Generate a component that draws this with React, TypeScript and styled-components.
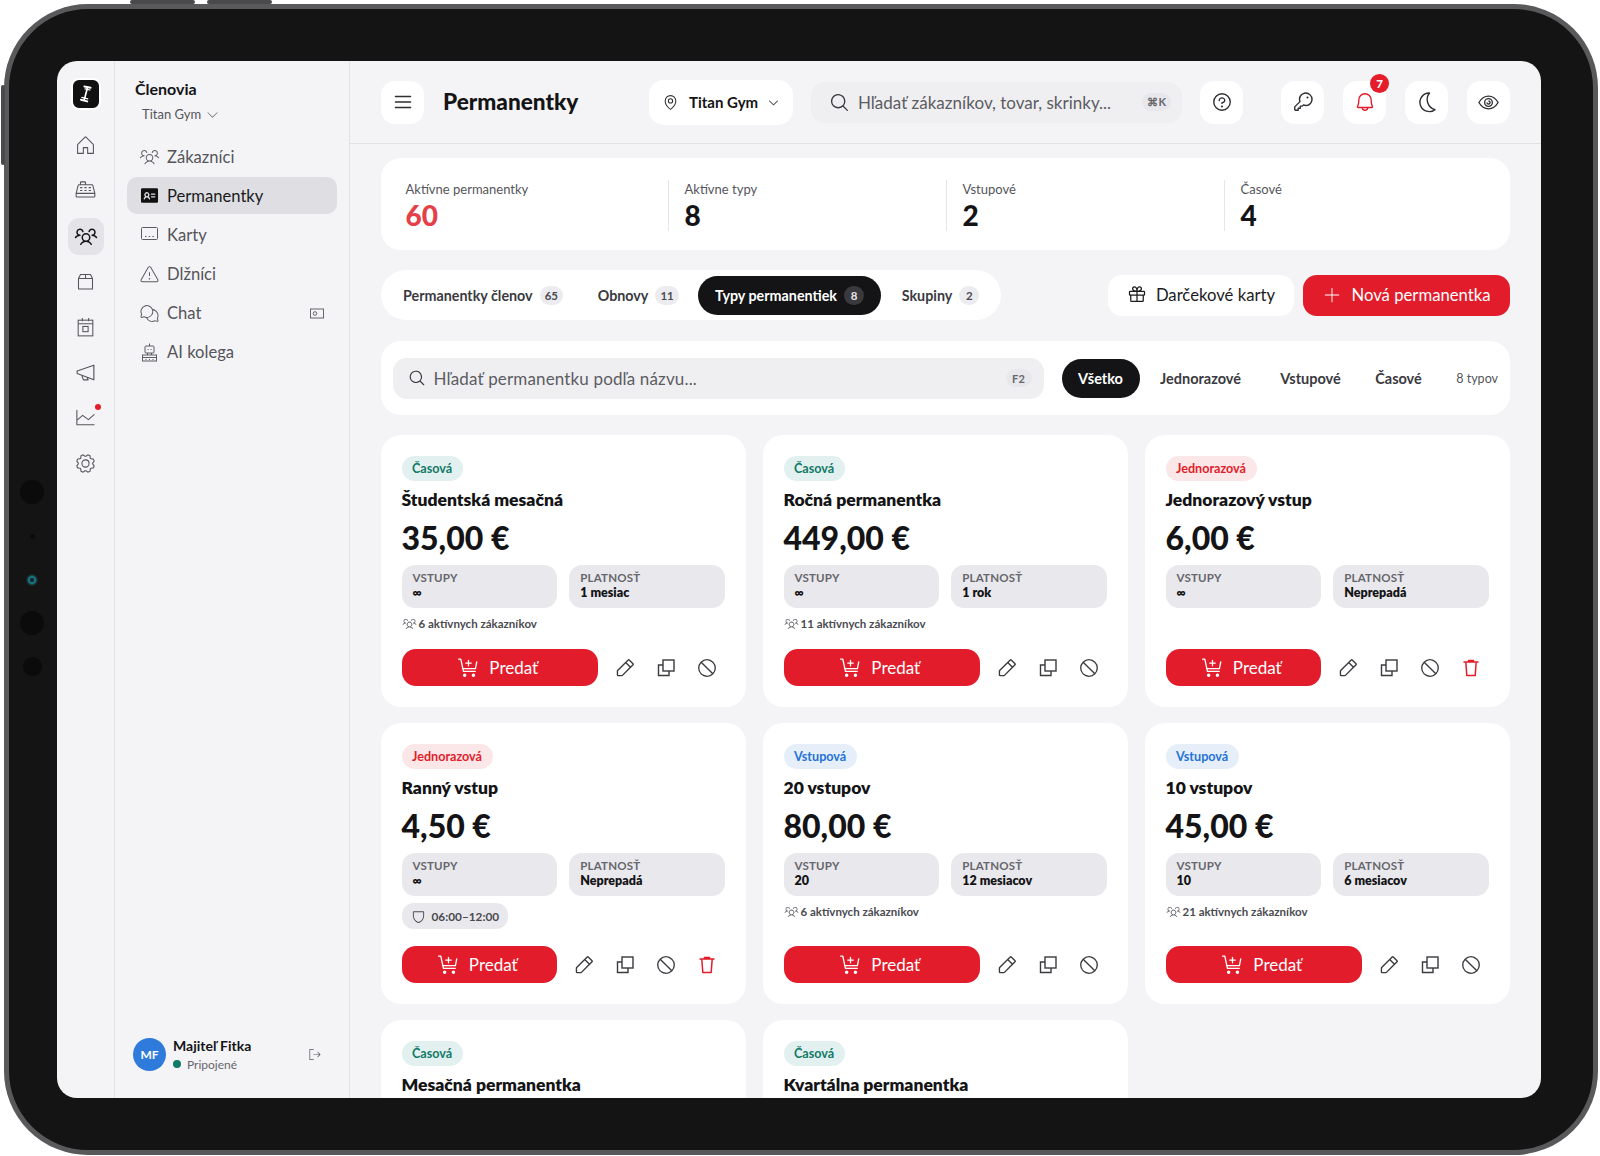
import React from "react";
import styled, { createGlobalStyle } from "styled-components";
import {
  PiBell,
  PiCaretDown,
  PiCaretDownLight,
  PiCashRegisterLight,
  PiChartLineLight,
  PiChatsCircleLight,
  PiGearLight,
  PiGift,
  PiHouseLight,
  PiIdentificationCardFill,
  PiKey,
  PiList,
  PiMagnifyingGlass,
  PiMapPin,
  PiPencilSimple,
  PiPlusLight,
  PiProhibit,
  PiQuestion,
  PiShield,
  PiSignOutLight,
  PiUsersThree,
  PiUsersThreeLight,
  PiWarningLight,
} from "react-icons/pi";

const GlobalStyle = createGlobalStyle`
  html, body { margin: 0; padding: 0; background: #fff; }
  body { font-family: "Lato", "Liberation Sans", sans-serif; color: #141416; }
  * { box-sizing: border-box; }
`;

const Stage = styled.div`
  width: 1600px;
  height: 1156px;
  padding: 4px 2px 1px 4px;
  overflow: hidden;
`;

const Device = styled.div`
  position: relative;
  width: 1594px;
  height: 1151px;
  background: #141414;
  border: 5px solid #59595b;
  border-radius: 84px;
  padding: 52px 52px 52px 48px;
`;

const HardwareButton = styled.div<{ $left: number; $top: number; $w: number; $h: number }>`
  position: absolute;
  left: ${(p) => p.$left}px;
  top: ${(p) => p.$top}px;
  width: ${(p) => p.$w}px;
  height: ${(p) => p.$h}px;
  background: #4a4a4c;
  border-radius: 2px;
`;

const Sensor = styled.div<{ $top: number; $size: number; $lens?: boolean }>`
  position: absolute;
  left: ${(p) => 23 - p.$size / 2}px;
  top: ${(p) => p.$top - p.$size / 2}px;
  width: ${(p) => p.$size}px;
  height: ${(p) => p.$size}px;
  border-radius: 50%;
  background: ${(p) => (p.$lens ? "radial-gradient(circle, #0d2a30 0 18%, #1d6f7a 30% 42%, #15262a 62%, #232325 100%)" : "#0b0b0b")};
`;

const Screen = styled.div`
  display: flex;
  width: 100%;
  height: 100%;
  background: #f4f4f6;
  border-radius: 20px;
  overflow: hidden;
`;

const Rail = styled.nav`
  width: 58px;
  flex: none;
  display: flex;
  flex-direction: column;
  align-items: center;
  padding-top: 17px;
  border-right: 1px solid #e1e1e4;
`;

const Logo = styled.div`
  width: 30px;
  height: 32px;
  background: #111;
  border: 2px solid #fff;
  border-radius: 8px;
  display: flex;
  align-items: center;
  justify-content: center;
  margin-bottom: 17px;
`;

const RailItem = styled.div<{ $active?: boolean }>`
  position: relative;
  width: 36px;
  height: 37px;
  margin-bottom: 8.4px;
  border-radius: 11px;
  display: flex;
  align-items: center;
  justify-content: center;
  font-size: 23px;
  color: ${(p) => (p.$active ? "#161618" : "#55555b")};
  background: ${(p) => (p.$active ? "#e4e4e8" : "transparent")};
`;

const RailDot = styled.span`
  position: absolute;
  top: 5px;
  right: 3px;
  width: 6px;
  height: 6px;
  border-radius: 50%;
  background: #e51c2a;
`;

const SubNav = styled.aside`
  width: 235px;
  flex: none;
  display: flex;
  flex-direction: column;
  padding: 18px 12px 0 12px;
  border-right: 1px solid #e1e1e4;
`;

const SubTitle = styled.div`
  font-size: 16px;
  font-weight: 700;
  line-height: 20px;
  padding-left: 8px;
`;

const GymSwitch = styled.div`
  display: flex;
  align-items: center;
  gap: 4px;
  height: 22px;
  margin: 4px 0 13px 15px;
  font-size: 13px;
  color: #55555b;
  svg { font-size: 15px; }
`;

const NavList = styled.div`
  display: flex;
  flex-direction: column;
  gap: 2.2px;
`;

const NavRow = styled.div<{ $active?: boolean }>`
  display: flex;
  align-items: center;
  gap: 7px;
  height: 37px;
  padding: 0 12px;
  border-radius: 10px;
  font-size: 16.6px;
  color: ${(p) => (p.$active ? "#1a1a1d" : "#55555b")};
  background: ${(p) => (p.$active ? "#dedee3" : "transparent")};
  svg { font-size: 21px; flex: none; color: ${(p) => (p.$active ? "#111" : "#5c5c62")}; }
`;

const NavTrail = styled.span`
  margin-left: auto;
  display: flex;
  padding-right: 1px;
  svg { font-size: 14px; }
`;

const UserBar = styled.div`
  margin-top: auto;
  display: flex;
  align-items: center;
  height: 33px;
  margin-bottom: 27px;
  padding: 0 15px 0 6px;
`;

const Avatar = styled.div`
  width: 33px;
  height: 33px;
  flex: none;
  border-radius: 50%;
  background: #2f7bdc;
  color: #fff;
  font-size: 12px;
  font-weight: 700;
  display: flex;
  align-items: center;
  justify-content: center;
`;

const UserText = styled.div`
  margin-left: 7px;
  flex: 1;
`;

const UserName = styled.div`
  font-size: 14px;
  font-weight: 700;
  line-height: 17px;
`;

const UserStatus = styled.div`
  display: flex;
  align-items: center;
  gap: 6px;
  margin-top: 2px;
  font-size: 12px;
  line-height: 17px;
  color: #66666c;
  &::before {
    content: "";
    width: 8px;
    height: 8px;
    border-radius: 50%;
    background: #127a66;
  }
`;

const Main = styled.main`
  flex: 1;
  min-width: 0;
  display: flex;
  flex-direction: column;
`;

const Header = styled.header`
  height: 83px;
  flex: none;
  display: flex;
  align-items: center;
  padding: 0 31px;
  border-bottom: 1px solid #e1e1e4;
`;

const SquareButton = styled.div<{ $gap?: number; $color?: string }>`
  position: relative;
  width: 43px;
  height: 43px;
  flex: none;
  margin-left: ${(p) => p.$gap ?? 0}px;
  background: #fff;
  border-radius: 14px;
  display: flex;
  align-items: center;
  justify-content: center;
  font-size: 22px;
  color: ${(p) => p.$color ?? "#2f2f33"};
`;

const Counter = styled.span`
  position: absolute;
  top: -7px;
  right: -3px;
  width: 19px;
  height: 19px;
  border-radius: 50%;
  background: #e51c2a;
  color: #fff;
  font-size: 11.5px;
  font-weight: 900;
  display: flex;
  align-items: center;
  justify-content: center;
`;

const PageTitle = styled.h1`
  width: 206px;
  margin: 0 0 0 19px;
  font-size: 22.6px;
  font-weight: 900;
  line-height: 30px;
`;

const LocationPill = styled.div`
  width: 144px;
  height: 45px;
  flex: none;
  background: #fff;
  border-radius: 15px;
  display: flex;
  align-items: center;
  padding-left: 13px;
  gap: 10px;
  font-size: 15px;
  font-weight: 700;
  svg:first-child { font-size: 17px; color: #2f2f33; }
  svg:last-child { font-size: 13px; margin-left: -1px; color: #4a4a50; }
`;

const HeaderSearch = styled.div`
  width: 371px;
  height: 41px;
  flex: none;
  margin-left: 18px;
  background: #efeff2;
  border-radius: 14px;
  display: flex;
  align-items: center;
  padding: 0 11px 0 18px;
  gap: 8px;
  font-size: 17px;
  color: #5c5c62;
  svg { font-size: 21px; color: #3a3a3f; flex: none; }
`;

const Kbd = styled.span`
  margin-left: auto;
  min-width: 26px;
  height: 18px;
  padding: 0 5px;
  border-radius: 9px;
  background: #e8e8ec;
  color: #66666c;
  font-size: 11px;
  font-weight: 700;
  display: flex;
  align-items: center;
  justify-content: center;
`;

const Content = styled.div`
  flex: 1;
  min-height: 0;
  overflow: hidden;
  padding: 14px 31px 0 30.5px;
  display: flex;
  flex-direction: column;
`;

const StatsCard = styled.section`
  height: 92px;
  flex: none;
  background: #fff;
  border-radius: 20px;
  display: grid;
  grid-template-columns: 262px repeat(3, 278px);
  padding: 0 0 0 25px;
  align-items: center;
  margin-bottom: 20px;
`;

const Stat = styled.div<{ $first?: boolean }>`
  height: 51px;
  margin-top: 2px;
  padding-left: ${(p) => (p.$first ? 0 : 16)}px;
  border-left: ${(p) => (p.$first ? "none" : "1px solid #e6e6ea")};
`;

const StatLabel = styled.div`
  font-size: 13px;
  line-height: 19px;
  color: #55555b;
`;

const StatValue = styled.div<{ $red?: boolean }>`
  font-size: 28px;
  line-height: 32px;
  font-weight: 900;
  color: ${(p) => (p.$red ? "#e5404a" : "#141416")};
`;

const TabsRow = styled.div`
  height: 50px;
  flex: none;
  display: flex;
  align-items: center;
  margin-bottom: 21px;
`;

const Tabs = styled.div`
  width: 620.5px;
  height: 50px;
  flex: none;
  background: #fff;
  border-radius: 25px;
  display: flex;
  align-items: center;
  padding: 0 0 0 7px;
`;

const Tab = styled.div<{ $active?: boolean; $w: number }>`
  width: ${(p) => p.$w}px;
  height: 39px;
  flex: none;
  border-radius: 20px;
  display: flex;
  align-items: center;
  justify-content: center;
  gap: 7px;
  font-size: 14.3px;
  font-weight: 700;
  color: ${(p) => (p.$active ? "#fff" : "#3a3a3f")};
  background: ${(p) => (p.$active ? "#141416" : "transparent")};
`;

const TabCount = styled.span<{ $active?: boolean }>`
  min-width: 20px;
  height: 19px;
  padding: 0 5px;
  border-radius: 10px;
  font-size: 11.5px;
  font-weight: 700;
  display: flex;
  align-items: center;
  justify-content: center;
  color: ${(p) => (p.$active ? "#e4e4e8" : "#4a4a50")};
  background: ${(p) => (p.$active ? "#3a3a3e" : "#ececf0")};
`;

const ActionButton = styled.div<{ $primary?: boolean; $w: number; $gap?: number }>`
  width: ${(p) => p.$w}px;
  height: 41px;
  flex: none;
  margin-left: ${(p) => p.$gap ?? 0}px;
  border-radius: 14px;
  display: flex;
  align-items: center;
  justify-content: center;
  gap: 9px;
  font-size: 16.7px;
  color: ${(p) => (p.$primary ? "#fff" : "#1c1c1f")};
  background: ${(p) => (p.$primary ? "#e21c2b" : "#fff")};
  svg { font-size: 20px; }
`;

const FilterCard = styled.section`
  height: 74px;
  flex: none;
  background: #fff;
  border-radius: 20px;
  display: flex;
  align-items: center;
  padding: 0 12px;
  margin-bottom: 20px;
`;

const FilterInput = styled.div`
  width: 651px;
  height: 41px;
  flex: none;
  background: #efeff2;
  border-radius: 14px;
  display: flex;
  align-items: center;
  gap: 8px;
  padding: 0 12px 0 15px;
  font-size: 17px;
  letter-spacing: 0.15px;
  color: #5c5c62;
  svg { font-size: 18px; color: #3a3a3f; flex: none; }
`;

const FilterChip = styled.div<{ $active?: boolean; $w: number; $gap?: number }>`
  width: ${(p) => p.$w}px;
  height: 39px;
  flex: none;
  margin-left: ${(p) => p.$gap ?? 0}px;
  border-radius: 20px;
  display: flex;
  align-items: center;
  justify-content: center;
  font-size: 14.5px;
  font-weight: 700;
  color: ${(p) => (p.$active ? "#fff" : "#3a3a3f")};
  background: ${(p) => (p.$active ? "#141416" : "transparent")};
`;

const TypeCount = styled.span`
  margin-left: auto;
  font-size: 12.5px;
  color: #55555b;
`;

const CardGrid = styled.div`
  display: grid;
  grid-template-columns: repeat(3, 1fr);
  gap: 16px 16.5px;
  flex: none;
`;

const Card = styled.article<{ $peek?: boolean }>`
  background: #fff;
  border-radius: 20px;
  padding: 21px;
  display: flex;
  flex-direction: column;
  min-height: ${(p) => (p.$peek ? 120 : 0)}px;
`;

const badgeColors = {
  "Časová": { bg: "#e2f0f0", fg: "#127a66" },
  "Jednorazová": { bg: "#fce7e8", fg: "#e21c2b" },
  "Vstupová": { bg: "#e6eff9", fg: "#2472d6" },
};

type Kind = keyof typeof badgeColors;

const Badge = styled.span<{ $kind: Kind }>`
  align-self: flex-start;
  height: 25px;
  padding: 0 10.5px;
  border-radius: 13px;
  display: flex;
  align-items: center;
  font-size: 12.6px;
  font-weight: 700;
  color: ${(p) => badgeColors[p.$kind].fg};
  background: ${(p) => badgeColors[p.$kind].bg};
`;

const CardTitle = styled.h3`
  margin: 7px 0 0;
  font-size: 17.5px;
  font-weight: 800;
  line-height: 23px;
`;

const Price = styled.div`
  margin-top: 6px;
  font-size: 32px;
  font-weight: 900;
  line-height: 42px;
`;

const InfoGrid = styled.div`
  margin-top: 6px;
  display: grid;
  grid-template-columns: 1fr 1fr;
  gap: 12px;
`;

const InfoBox = styled.div`
  height: 43px;
  padding: 5px 11px;
  border-radius: 13px;
  background: #e9e9ed;
`;

const InfoLabel = styled.div`
  font-size: 11.5px;
  font-weight: 700;
  line-height: 15px;
  letter-spacing: 0.2px;
  color: #66666c;
`;

const InfoValue = styled.div`
  font-size: 12.5px;
  font-weight: 800;
  line-height: 15px;
`;

const MetaRow = styled.div`
  display: flex;
  align-items: center;
  gap: 2px;
  height: 17px;
  margin-top: 7px;
  font-size: 11.5px;
  font-weight: 700;
  color: #4a4a50;
  svg { font-size: 15px; color: #5c5c62; }
`;

const TimePill = styled.div`
  align-self: flex-start;
  display: flex;
  align-items: center;
  gap: 6px;
  height: 26px;
  margin-top: 7px;
  padding: 0 9px;
  border-radius: 12px;
  background: #e9e9ed;
  font-size: 11.8px;
  font-weight: 700;
  color: #4a4a50;
  svg { font-size: 15px; }
`;

const Actions = styled.div`
  margin-top: auto;
  padding-top: 17px;
  display: flex;
  align-items: center;
  gap: 5px;
`;

const SellButton = styled.div`
  flex: 1;
  height: 37px;
  margin-right: 4px;
  padding-right: 4px;
  border-radius: 14px;
  background: #e21c2b;
  color: #fff;
  font-size: 17px;
  display: flex;
  align-items: center;
  justify-content: center;
  gap: 9px;
`;

const IconAction = styled.div<{ $danger?: boolean }>`
  width: 36px;
  height: 37px;
  flex: none;
  display: flex;
  align-items: center;
  justify-content: center;
  font-size: 22px;
  color: ${(p) => (p.$danger ? "#e21c2b" : "#3a3a3f")};
`;

const LogoMark = () => (
  <svg width="18" height="20" viewBox="0 0 18 20" fill="none" stroke="#fff" strokeLinecap="round">
    <path d="M10.400 4 7.200 16" strokeWidth="1.700" />
    <path d="M7.400 2.400 13.600 3.800" strokeWidth="2" />
    <path d="M4 15.800 10.200 17.400" strokeWidth="2" />
    <path d="M4.800 13.400 10.800 14.800" strokeWidth="1.200" />
    <path d="M8 4.800 13 6" strokeWidth="1.200" />
  </svg>
);

const PackageMark = () => (
  <svg width="23" height="23" viewBox="0 0 23 23" fill="none" stroke="currentColor" strokeWidth="1.050" strokeLinejoin="round">
    <path d="M4.500 8.500 6.500 4.500h10l2 4v10.500h-14z" />
    <path d="M4.500 8.500h14M11.500 4.500v4" />
  </svg>
);

const CalendarMark = () => (
  <svg width="23" height="23" viewBox="0 0 22 22" fill="none" stroke="currentColor" strokeWidth="1">
    <rect x="4" y="4" width="14" height="15" />
    <path d="M8 2v3M14 2v3M4 7.500h14" />
    <rect x="8.500" y="10" width="5" height="5" />
  </svg>
);

const MegaphoneMark = () => (
  <svg width="23" height="23" viewBox="0 0 22 22" fill="none" stroke="currentColor" strokeWidth="1.100" strokeLinejoin="round">
    <path d="M19 4 3 9.500v2.500l16 6z" />
    <path d="M7.500 13.700 9 18h4.500l-1-2.500" />
  </svg>
);

const CardsMark = () => (
  <svg width="21" height="21" viewBox="0 0 21 21" fill="none" stroke="currentColor" strokeWidth="1">
    <rect x="2.500" y="3.500" width="16" height="12" rx="1" />
    <path d="M6 12.500h1.500M9.700 12.500h1.500M13.400 12.500h1.500" />
  </svg>
);

const RobotMark = () => (
  <svg width="21" height="21" viewBox="0 0 21 21" fill="none" stroke="currentColor" strokeWidth="1">
    <path d="M10.500 1.500v2.500" />
    <rect x="6" y="4" width="9" height="7" rx="1" />
    <path d="M8.500 7.500h1M11.500 7.500h1M8.500 11v2M12.500 11v2" />
    <rect x="3.500" y="13" width="14" height="6" />
    <path d="M3.500 15.500h14M6.500 17.500h1M10 17.500h1M13.500 17.500h1" />
  </svg>
);

const ChatTrail = () => (
  <svg width="14" height="11" viewBox="0 0 14 11" fill="none" stroke="#66666c" strokeWidth="1">
    <rect x="0.500" y="1" width="13" height="9" />
    <circle cx="5" cy="5.500" r="1.800" />
  </svg>
);

const MoonMark = () => (
  <svg width="24" height="24" viewBox="0 0 24 24" fill="none" stroke="currentColor" strokeWidth="1.400" strokeLinejoin="round">
    <path d="M14.500 3A9.300 9.300 0 1 0 20 19.600 10.400 10.400 0 0 1 14.500 3Z" />
  </svg>
);

const EyeMark = () => (
  <svg width="23" height="23" viewBox="0 0 24 24" fill="none" stroke="currentColor" strokeWidth="1.400">
    <path d="M2 12c2.600-4.400 6-6.600 10-6.600S19.400 7.600 22 12c-2.600 4.400-6 6.600-10 6.600S4.600 16.400 2 12Z" />
    <circle cx="12" cy="12" r="4" />
    <path d="M12 10.400a1.600 1.600 0 1 1-1.600 1.600" />
  </svg>
);

const CopyMark = () => (
  <svg width="20" height="20" viewBox="0 0 20 20" fill="none" stroke="currentColor" strokeWidth="1.400">
    <rect x="7" y="2" width="11" height="11" />
    <path d="M7 7H2.500v10.500H13V13" />
  </svg>
);

const TrashMark = () => (
  <svg width="20" height="20" viewBox="0 0 20 20" fill="none" stroke="currentColor" strokeWidth="1.500" strokeLinecap="round" strokeLinejoin="round">
    <path d="M3 4h14M7.500 4V2.500h5V4M4.800 4l1 13.500h8.400l1-13.500" />
  </svg>
);

const CartPlus = () => (
  <svg width="23" height="22" viewBox="0 0 20 20" fill="none" stroke="#fff" strokeWidth="1.200" strokeLinecap="round" strokeLinejoin="round">
    <path d="M1 2h2l2.400 11h10.800M17.500 4.500l-1.200 6H4.600" />
    <path d="M10 3v5M7.500 5.500h5" />
    <circle cx="6.500" cy="16.500" r="1" fill="#fff" />
    <circle cx="14.500" cy="16.500" r="1" fill="#fff" />
  </svg>
);

type CardData = {
  kind: Kind;
  name: string;
  price?: string;
  entries?: string;
  validity?: string;
  active?: number;
  hours?: string;
  canDelete?: boolean;
};

const cards: CardData[] = [
  { kind: "Časová", name: "Študentská mesačná", price: "35,00 €", entries: "∞", validity: "1 mesiac", active: 6 },
  { kind: "Časová", name: "Ročná permanentka", price: "449,00 €", entries: "∞", validity: "1 rok", active: 11 },
  { kind: "Jednorazová", name: "Jednorazový vstup", price: "6,00 €", entries: "∞", validity: "Neprepadá", canDelete: true },
  { kind: "Jednorazová", name: "Ranný vstup", price: "4,50 €", entries: "∞", validity: "Neprepadá", hours: "06:00–12:00", canDelete: true },
  { kind: "Vstupová", name: "20 vstupov", price: "80,00 €", entries: "20", validity: "12 mesiacov", active: 6 },
  { kind: "Vstupová", name: "10 vstupov", price: "45,00 €", entries: "10", validity: "6 mesiacov", active: 21 },
  { kind: "Časová", name: "Mesačná permanentka" },
  { kind: "Časová", name: "Kvartálna permanentka" },
];

const PassCard = ({ card }: { card: CardData }) => {
  // the last row runs under the screen edge, only its heading is visible
  if (!card.price) {
    return (
      <Card $peek>
        <Badge $kind={card.kind}>{card.kind}</Badge>
        <CardTitle>{card.name}</CardTitle>
      </Card>
    );
  }
  return (
    <Card>
      <Badge $kind={card.kind}>{card.kind}</Badge>
      <CardTitle>{card.name}</CardTitle>
      <Price>{card.price}</Price>
      <InfoGrid>
        <InfoBox>
          <InfoLabel>VSTUPY</InfoLabel>
          <InfoValue>{card.entries}</InfoValue>
        </InfoBox>
        <InfoBox>
          <InfoLabel>PLATNOSŤ</InfoLabel>
          <InfoValue>{card.validity}</InfoValue>
        </InfoBox>
      </InfoGrid>
      {card.active !== undefined && (
        <MetaRow>
          <PiUsersThreeLight />
          {card.active} aktívnych zákazníkov
        </MetaRow>
      )}
      {card.hours && (
        <TimePill>
          <PiShield />
          {card.hours}
        </TimePill>
      )}
      <Actions>
        <SellButton>
          <CartPlus />
          Predať
        </SellButton>
        <IconAction><PiPencilSimple /></IconAction>
        <IconAction><CopyMark /></IconAction>
        <IconAction><PiProhibit /></IconAction>
        {card.canDelete && <IconAction $danger><TrashMark /></IconAction>}
      </Actions>
    </Card>
  );
};

export default function App() {
  return (
    <Stage>
      <GlobalStyle />
      <Device>
        <HardwareButton $left={121} $top={-9} $w={65} $h={4} />
        <HardwareButton $left={198} $top={-9} $w={65} $h={4} />
        <HardwareButton $left={-8} $top={76} $w={4} $h={80} />
        <Sensor $top={483} $size={24} />
        <Sensor $top={527} $size={5} />
        <Sensor $top={571} $size={12} $lens />
        <Sensor $top={614} $size={24} />
        <Sensor $top={657} $size={19} />
        <Screen>
          <Rail>
            <Logo><LogoMark /></Logo>
            <RailItem><PiHouseLight /></RailItem>
            <RailItem><PiCashRegisterLight /></RailItem>
            <RailItem $active><PiUsersThree size={24} /></RailItem>
            <RailItem><PackageMark /></RailItem>
            <RailItem><CalendarMark /></RailItem>
            <RailItem><MegaphoneMark /></RailItem>
            <RailItem><PiChartLineLight /><RailDot /></RailItem>
            <RailItem><PiGearLight /></RailItem>
          </Rail>
          <SubNav>
            <SubTitle>Členovia</SubTitle>
            <GymSwitch>Titan Gym <PiCaretDownLight /></GymSwitch>
            <NavList>
              <NavRow><PiUsersThreeLight />Zákazníci</NavRow>
              <NavRow $active><PiIdentificationCardFill />Permanentky</NavRow>
              <NavRow><CardsMark />Karty</NavRow>
              <NavRow><PiWarningLight />Dlžníci</NavRow>
              <NavRow><PiChatsCircleLight />Chat<NavTrail><ChatTrail /></NavTrail></NavRow>
              <NavRow><RobotMark />AI kolega</NavRow>
            </NavList>
            <UserBar>
              <Avatar>MF</Avatar>
              <UserText>
                <UserName>Majiteľ Fitka</UserName>
                <UserStatus>Pripojené</UserStatus>
              </UserText>
              <PiSignOutLight size={15} color="#55555b" />
            </UserBar>
          </SubNav>
          <Main>
            <Header>
              <SquareButton><PiList /></SquareButton>
              <PageTitle>Permanentky</PageTitle>
              <LocationPill><PiMapPin />Titan Gym<PiCaretDown /></LocationPill>
              <HeaderSearch>
                <PiMagnifyingGlass />
                Hľadať zákazníkov, tovar, skrinky...
                <Kbd>⌘K</Kbd>
              </HeaderSearch>
              <SquareButton $gap={18}><PiQuestion /></SquareButton>
              <SquareButton $gap={38}><PiKey /></SquareButton>
              <SquareButton $gap={19} $color="#e21c2b"><PiBell /><Counter>7</Counter></SquareButton>
              <SquareButton $gap={19}><MoonMark /></SquareButton>
              <SquareButton $gap={19}><EyeMark /></SquareButton>
            </Header>
            <Content>
              <StatsCard>
                <Stat $first>
                  <StatLabel>Aktívne permanentky</StatLabel>
                  <StatValue $red>60</StatValue>
                </Stat>
                <Stat>
                  <StatLabel>Aktívne typy</StatLabel>
                  <StatValue>8</StatValue>
                </Stat>
                <Stat>
                  <StatLabel>Vstupové</StatLabel>
                  <StatValue>2</StatValue>
                </Stat>
                <Stat>
                  <StatLabel>Časové</StatLabel>
                  <StatValue>4</StatValue>
                </Stat>
              </StatsCard>
              <TabsRow>
                <Tabs>
                  <Tab $w={191}>Permanentky členov <TabCount>65</TabCount></Tab>
                  <Tab $w={119.500}>Obnovy <TabCount>11</TabCount></Tab>
                  <Tab $w={183} $active>Typy permanentiek <TabCount $active>8</TabCount></Tab>
                  <Tab $w={119}>Skupiny <TabCount>2</TabCount></Tab>
                </Tabs>
                <ActionButton $w={186} $gap={107}><PiGift />Darčekové karty</ActionButton>
                <ActionButton $w={207} $gap={9} $primary><PiPlusLight />Nová permanentka</ActionButton>
              </TabsRow>
              <FilterCard>
                <FilterInput>
                  <PiMagnifyingGlass />
                  Hľadať permanentku podľa názvu...
                  <Kbd>F2</Kbd>
                </FilterInput>
                <FilterChip $w={78} $gap={18} $active>Všetko</FilterChip>
                <FilterChip $w={122}>Jednorazové</FilterChip>
                <FilterChip $w={98}>Vstupové</FilterChip>
                <FilterChip $w={78}>Časové</FilterChip>
                <TypeCount>8 typov</TypeCount>
              </FilterCard>
              <CardGrid>
                {cards.map((card) => (
                  <PassCard key={card.name} card={card} />
                ))}
              </CardGrid>
            </Content>
          </Main>
        </Screen>
      </Device>
    </Stage>
  );
}
